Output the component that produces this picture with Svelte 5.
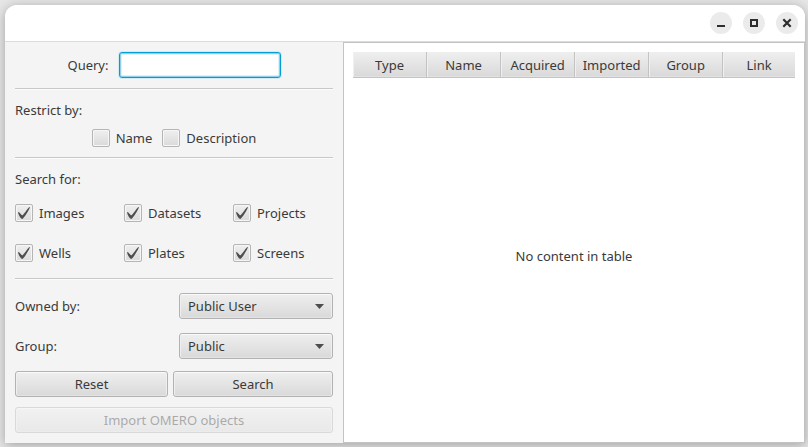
<script>
  let query = $state('');
  let restrictions = $state([
    { name: 'Name', checked: false },
    { name: 'Description', checked: false }
  ]);
  let types = $state([
    { name: 'Images', checked: true },
    { name: 'Datasets', checked: true },
    { name: 'Projects', checked: true },
    { name: 'Wells', checked: true },
    { name: 'Plates', checked: true },
    { name: 'Screens', checked: true }
  ]);
  const columns = ['Type', 'Name', 'Acquired', 'Imported', 'Group', 'Link'];

  function reset() {
    query = '';
    for (const r of restrictions) r.checked = false;
    for (const t of types) t.checked = true;
  }
</script>

{#snippet check(item)}
  <label class="check">
    <span class="box">
      <input type="checkbox" bind:checked={item.checked} />
      {#if item.checked}
        <svg viewBox="-0.7 -1 16.9 17.2" preserveAspectRatio="none" aria-hidden="true">
          <path
            d="M-0.25,6.083c0.843-0.758,4.583,4.833,5.75,4.833S14.5-1.5,15.917-0.917c1.292,0.532-8.75,17.083-10.5,17.083C3,16.167-1.667,7.333-0.25,6.083z"
          />
        </svg>
      {/if}
    </span>
    {item.name}
  </label>
{/snippet}

<div class="desktop">
  <div class="window">
    <header>
      <button class="control" aria-label="Minimize">
        <svg viewBox="0 0 22 22"><path d="M7 13h8v2H7z" /></svg>
      </button>
      <button class="control" aria-label="Maximize">
        <svg viewBox="0 0 22 22"><path fill-rule="evenodd" d="M7 7h8v8H7zM9 9v4h4V9z" /></svg>
      </button>
      <button class="control" aria-label="Close">
        <svg viewBox="0 0 22 22"><path class="cross" d="M7.3 7.3l7.4 7.4M14.7 7.3l-7.4 7.4" /></svg>
      </button>
    </header>

    <main>
      <form onsubmit={(e) => e.preventDefault()}>
        <div class="query">
          <label for="query">Query:</label>
          <input id="query" type="text" bind:value={query} />
        </div>

        <hr />
        <div class="title">Restrict by:</div>
        <div class="restrict">
          {#each restrictions as item}{@render check(item)}{/each}
        </div>

        <hr />
        <div class="title">Search for:</div>
        <div class="types">
          {#each types as item}{@render check(item)}{/each}
        </div>

        <hr />
        <div class="filters">
          <div class="field">
            <label for="owner">Owned by:</label>
            <span class="combo">
              <select id="owner"><option>Public User</option></select>
              <svg viewBox="0 0 9 5" aria-hidden="true"><path d="M0 0h9L4.5 5z" /></svg>
            </span>
          </div>
          <div class="field">
            <label for="group">Group:</label>
            <span class="combo">
              <select id="group"><option>Public</option></select>
              <svg viewBox="0 0 9 5" aria-hidden="true"><path d="M0 0h9L4.5 5z" /></svg>
            </span>
          </div>
        </div>

        <div class="actions">
          <button class="push" type="button" onclick={reset}>Reset</button>
          <button class="push" type="submit">Search</button>
        </div>
        <button class="push" type="button" disabled>Import OMERO objects</button>
      </form>

      <section>
        <table>
          <thead>
            <tr>
              {#each columns as column}<th scope="col">{column}</th>{/each}
            </tr>
          </thead>
        </table>
        <p>No content in table</p>
      </section>
    </main>
  </div>
</div>

<style>
  :global(body) {
    margin: 0;
    background: #e6e6e6;
  }

  .desktop {
    box-sizing: border-box;
    display: flex;
    min-height: 100vh;
    padding: 5px 3px 4px 5px;
    overflow: hidden;
    font: 13px/18px 'Noto Sans', 'Open Sans', sans-serif;
    color: #3a3a3a;
  }

  .window {
    flex: 1;
    display: flex;
    flex-direction: column;
    border-radius: 12px 12px 0 0;
    background: #f4f4f4;
    box-shadow: 0 2px 12px rgba(0, 0, 0, 0.3);
  }

  header {
    display: flex;
    justify-content: flex-end;
    align-items: center;
    gap: 11px;
    height: 36px;
    padding-right: 7px;
    border-bottom: 1px solid #dcdcdc;
    border-radius: 12px 12px 0 0;
    background: #fff;
  }

  .control {
    width: 22px;
    height: 22px;
    padding: 0;
    border: 0;
    border-radius: 50%;
    background: #ebebeb;
  }

  .control svg {
    display: block;
    fill: #2e2e2e;
  }

  .cross {
    fill: none;
    stroke: #2e2e2e;
    stroke-width: 2.2;
  }

  main {
    flex: 1;
    display: flex;
  }

  form {
    box-sizing: border-box;
    flex: none;
    display: flex;
    flex-direction: column;
    width: 338px;
    padding: 10px;
  }

  .query {
    display: flex;
    justify-content: center;
    align-items: center;
    gap: 10px;
  }

  .query input {
    box-sizing: border-box;
    width: 162px;
    height: 26px;
    padding: 0 8px;
    border: 1px solid #039ed3;
    border-radius: 3px;
    outline: none;
    background: #fff;
    box-shadow: 0 0 0 1px #d3eaf3, inset 0 0 0 1px #8fd0e8, inset 0 0 0 2px #e2f1f8;
    font: inherit;
    color: inherit;
  }

  hr {
    width: 100%;
    height: 1px;
    margin: 10px 0 11px;
    border: 0;
    border-top: 1px solid #c8c8c8;
    background: #fcfcfc;
  }

  .restrict {
    display: flex;
    justify-content: center;
    gap: 10px;
    margin-top: 10px;
  }

  .types {
    display: grid;
    grid-template-columns: repeat(3, 1fr);
    gap: 22px 9px;
    margin: 16px 0 6px;
  }

  .check {
    display: flex;
    align-items: center;
    gap: 6px;
  }

  .box {
    position: relative;
    flex: none;
    width: 18px;
    height: 18px;
  }

  .box input {
    appearance: none;
    box-sizing: border-box;
    display: block;
    width: 18px;
    height: 18px;
    margin: 0;
    border: 1px solid #b5b5b5;
    border-radius: 2px;
    background: linear-gradient(#efefef, #dadada);
    box-shadow: inset 0 0 0 1px #f6f6f6;
  }

  .box svg {
    position: absolute;
    top: 3px;
    left: 3px;
    width: 12px;
    height: 12px;
    fill: #4d4d4d;
    pointer-events: none;
  }

  .filters {
    display: flex;
    flex-direction: column;
    gap: 14px;
    margin: 2px 0 12px;
  }

  .field {
    display: flex;
    justify-content: space-between;
    align-items: center;
  }

  .combo {
    position: relative;
    width: 154px;
  }

  .combo select,
  .push {
    box-sizing: border-box;
    display: block;
    width: 100%;
    height: 26px;
    border: 1px solid #b2b2b2;
    border-radius: 3px;
    background: linear-gradient(#efefef, #d9d9d9);
    box-shadow: inset 0 1px #fafafa, inset 1px 0 #efefef, inset -1px 0 #efefef, inset 0 -1px #e2e2e2;
    font: inherit;
    color: inherit;
  }

  .combo select {
    appearance: none;
    padding: 0 24px 0 8px;
  }

  .combo svg {
    position: absolute;
    top: 11px;
    right: 9px;
    width: 9px;
    height: 5px;
    fill: #4d4d4d;
    pointer-events: none;
  }

  .actions {
    display: flex;
    gap: 5px;
    margin-bottom: 10px;
  }

  .actions .push:first-child {
    flex: 0 0 153px;
  }

  .push {
    padding: 0;
  }

  .push:disabled {
    opacity: 0.4;
  }

  section {
    flex: 1;
    display: flex;
    flex-direction: column;
    padding: 9px;
    border: 1px solid #c3c3c3;
    background: #fff;
  }

  table {
    width: 100%;
    border-spacing: 0;
    table-layout: fixed;
  }

  th {
    box-sizing: border-box;
    width: 16.75%;
    height: 26px;
    padding: 0;
    border-right: 1px solid #c3c3c3;
    border-bottom: 1px solid #c3c3c3;
    background: linear-gradient(#efefef, #d9d9d9);
    box-shadow: inset 1px 0 #f0f0f0, inset 0 -1px #e2e2e2;
    font-weight: 400;
  }

  th:last-child {
    width: auto;
    border-right: 0;
  }

  p {
    flex: 1;
    display: flex;
    justify-content: center;
    align-items: center;
    margin: 0;
  }
</style>
